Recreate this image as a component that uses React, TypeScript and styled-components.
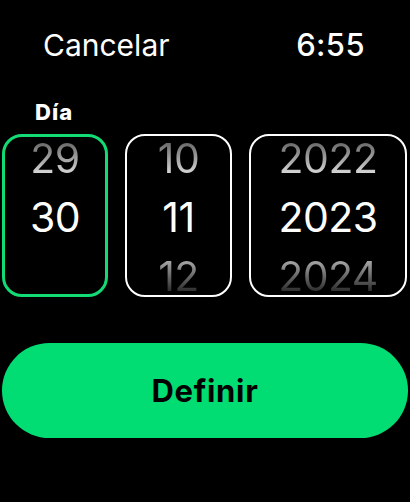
import React from "react";
import styled, {createGlobalStyle} from "styled-components";

/**     STYLED      **/
const GlobalStyle = createGlobalStyle`
    html, body {
        margin: 0;
        padding: 0;
        background: #000;
    }
    body {
        font-family: "Inter", "Roboto", "Noto Sans", sans-serif;
        color: #fff;
        -webkit-font-smoothing: antialiased;
    }
`

const Screen = styled.div`
    width: 410px;
    height: 502px;
    background: #000;
    display: flex;
    flex-direction: column;
    overflow: hidden;
`

const TopBar = styled.header`
    display: flex;
    justify-content: space-between;
    align-items: center;
    padding: 30px 45px 0 43px;
    height: 30px;
`

const CancelText = styled.span`
    font-size: 30px;
    line-height: 30px;
    font-weight: 400;
    letter-spacing: 0;
`

const Clock = styled.span`
    font-size: 31px;
    line-height: 30px;
    font-weight: 500;
    letter-spacing: 0.4px;
`

const FieldLabel = styled.div`
    margin: 41px 0 0 35px;
    height: 33px;
    font-size: 22px;
    line-height: 22px;
    font-weight: 800;
    letter-spacing: 1px;
`

const Pickers = styled.div`
    display: grid;
    grid-template-columns: 106px 107px 158px;
    column-gap: 17px;
    padding: 0 2px;
`

const Wheel = styled.div<{ $active?: boolean }>`
    box-sizing: border-box;
    height: 163px;
    border: ${p => p.$active ? '3px solid #12da74' : '2px solid #fff'};
    border-radius: 20px;
    display: flex;
    flex-direction: column;
    align-items: center;
    justify-content: center;
    padding-top: 3px;
`

const gradients = {
    prev: 'linear-gradient(to bottom, #5e5e5e 18%, #dcdcdc 78%)',
    next: 'linear-gradient(to bottom, #b4b4b4 18%, #1c1c1c 82%)',
}

const WheelItem = styled.div<{ $pos: 'prev' | 'current' | 'next' }>`
    flex: 0 0 59px;
    height: 59px;
    font-size: 41px;
    line-height: 59px;
    font-weight: 400;
    letter-spacing: -0.5px;
    color: #fff;
    ${p => p.$pos !== 'current' && `
        background: ${gradients[p.$pos]};
        -webkit-background-clip: text;
        background-clip: text;
        color: transparent;
    `}
`

const SetButton = styled.button`
    margin: 46px 2px 0;
    height: 95px;
    border: none;
    border-radius: 48px;
    background: #02dd73;
    color: #000;
    font-family: inherit;
    font-size: 31px;
    font-weight: 700;
    letter-spacing: 0.7px;
    cursor: pointer;
`
/**     STYLED      **/

type Column = { values: [string, string, string]; active?: boolean }

const columns: Column[] = [
    {values: ['29', '30', ''], active: true},
    {values: ['10', '11', '12']},
    {values: ['2022', '2023', '2024']},
]

const positions = ['prev', 'current', 'next'] as const

export default function App() {
    return (
        <>
            <GlobalStyle/>
            <Screen>
                <TopBar>
                    <CancelText>Cancelar</CancelText>
                    <Clock>6:55</Clock>
                </TopBar>
                <FieldLabel>Día</FieldLabel>
                <Pickers>
                    {columns.map((col, i) => (
                        <Wheel key={i} $active={col.active}>
                            {col.values.map((v, j) => (
                                <WheelItem key={j} $pos={positions[j]}>{v}</WheelItem>
                            ))}
                        </Wheel>
                    ))}
                </Pickers>
                <SetButton>Definir</SetButton>
            </Screen>
        </>
    )
}
